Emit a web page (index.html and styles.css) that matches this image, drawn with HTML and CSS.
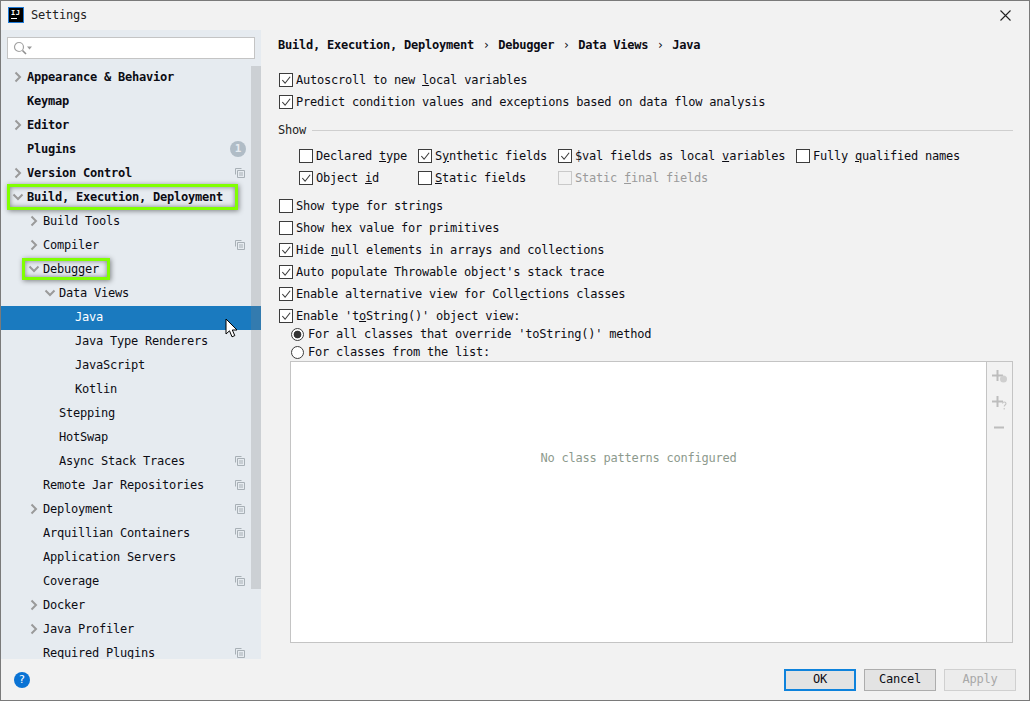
FILE: index.html
```html
<!DOCTYPE html>
<html lang="en">
<head>
<meta charset="utf-8">
<title>Settings</title>
<link rel="stylesheet" href="styles.css">
</head>
<body>
<svg class="defs" width="0" height="0">
  <defs>
    <symbol id="right" viewBox="0 0 8 12"><path d="M1.5 1.5 6 6l-4.500 4.500" fill="none" stroke="#9a9a9a" stroke-width="2"/></symbol>
    <symbol id="down" viewBox="0 0 12 8"><path d="M1.500 1.500 6 6l4.500-4.500" fill="none" stroke="#9a9a9a" stroke-width="2"/></symbol>
    <symbol id="copy" viewBox="0 0 10 10"><path d="M.5 6.500V.5h6M2.500 2.500h7v7h-7zM4 5h4M4 7h4" fill="none" stroke="#a8b0b6" stroke-width="1"/></symbol>
    <symbol id="tick" viewBox="0 0 13 13"><path d="M2.500 6.500 5.500 10 11 3" fill="none" stroke="#3c3c3c" stroke-width="1.200"/></symbol>
  </defs>
</svg>
<div class="window">
  <header class="titlebar">
    <span class="logo"><span class="logo-text">IJ</span><span class="logo-bar"></span></span>
    <span class="title">Settings</span>
    <svg class="close" width="11" height="11" viewBox="0 0 11 11"><path d="M.5.5l10 10M10.500.5l-10 10" stroke="#222" stroke-width="1.100"/></svg>
  </header>
  <div class="body">
    <aside class="sidebar">
      <div class="search">
        <svg width="20" height="15" viewBox="0 0 20 15"><circle cx="6" cy="6" r="4.500" fill="none" stroke="#a2a2a2" stroke-width="1.200"/><path d="M9.500 9.500l3.500 3.500" stroke="#8f8f8f" stroke-width="1.600"/><path d="M14 5.500h5l-2.500 3z" fill="#9a9a9a"/></svg>
      </div>
      <div class="tree">
        <div class="row d0 strong"><svg class="arrow"><use href="#right"/></svg><span>Appearance &amp; Behavior</span></div>
        <div class="row d0 strong"><span>Keymap</span></div>
        <div class="row d0 strong"><svg class="arrow"><use href="#right"/></svg><span>Editor</span></div>
        <div class="row d0 strong"><span>Plugins</span><span class="badge">1</span></div>
        <div class="row d0 strong"><svg class="arrow"><use href="#right"/></svg><span>Version Control</span><svg class="copy"><use href="#copy"/></svg></div>
        <div class="row d0 strong"><svg class="arrow wide"><use href="#down"/></svg><span>Build, Execution, Deployment</span><i class="mark mark-build"></i></div>
        <div class="row d1"><svg class="arrow"><use href="#right"/></svg><span>Build Tools</span></div>
        <div class="row d1"><svg class="arrow"><use href="#right"/></svg><span>Compiler</span><svg class="copy"><use href="#copy"/></svg></div>
        <div class="row d1"><svg class="arrow wide"><use href="#down"/></svg><span>Debugger</span><i class="mark mark-debugger"></i></div>
        <div class="row d2"><svg class="arrow wide"><use href="#down"/></svg><span>Data Views</span></div>
        <div class="row d3 selected"><span>Java</span></div>
        <div class="row d3"><span>Java Type Renderers</span></div>
        <div class="row d3"><span>JavaScript</span></div>
        <div class="row d3"><span>Kotlin</span></div>
        <div class="row d2"><span>Stepping</span></div>
        <div class="row d2"><span>HotSwap</span></div>
        <div class="row d2"><span>Async Stack Traces</span><svg class="copy"><use href="#copy"/></svg></div>
        <div class="row d1"><span>Remote Jar Repositories</span><svg class="copy"><use href="#copy"/></svg></div>
        <div class="row d1"><svg class="arrow"><use href="#right"/></svg><span>Deployment</span><svg class="copy"><use href="#copy"/></svg></div>
        <div class="row d1"><span>Arquillian Containers</span><svg class="copy"><use href="#copy"/></svg></div>
        <div class="row d1"><span>Application Servers</span></div>
        <div class="row d1"><span>Coverage</span><svg class="copy"><use href="#copy"/></svg></div>
        <div class="row d1"><svg class="arrow"><use href="#right"/></svg><span>Docker</span></div>
        <div class="row d1"><svg class="arrow"><use href="#right"/></svg><span>Java Profiler</span></div>
        <div class="row d1"><span>Required Plugins</span><svg class="copy"><use href="#copy"/></svg></div>
        <div class="scrollbar"></div>
        <svg class="cursor" width="14" height="20" viewBox="0 0 14 20"><path d="M1 1v15l3.500-3.200 2.500 6 2.800-1.200-2.500-5.600H12z" fill="#fff" stroke="#000" stroke-width="1"/></svg>
      </div>
    </aside>
    <main class="main">
      <nav class="crumbs">
        <span>Build, Execution, Deployment</span><span class="sep">›</span><span>Debugger</span><span class="sep">›</span><span>Data Views</span><span class="sep">›</span><span>Java</span>
      </nav>
      <label class="opt"><span class="box"><svg><use href="#tick"/></svg></span><span>Autoscroll to new <u>l</u>ocal variables</span></label>
      <label class="opt"><span class="box"><svg><use href="#tick"/></svg></span><span>Predict condition values and exceptions based on data flow analysis</span></label>
      <div class="group-title"><span>Show</span><span class="rule"></span></div>
      <div class="fields">
        <label class="opt"><span class="box"></span><span>Declared <u>t</u>ype</span></label>
        <label class="opt"><span class="box"><svg><use href="#tick"/></svg></span><span>S<u>y</u>nthetic fields</span></label>
        <label class="opt"><span class="box"><svg><use href="#tick"/></svg></span><span>$val fields as local <u>v</u>ariables</span></label>
        <label class="opt"><span class="box"></span><span>Fully <u>q</u>ualified names</span></label>
        <label class="opt"><span class="box"><svg><use href="#tick"/></svg></span><span>Object <u>i</u>d</span></label>
        <label class="opt"><span class="box"></span><span><u>S</u>tatic fields</span></label>
        <label class="opt disabled"><span class="box"></span><span>Static <u>f</u>inal fields</span></label>
      </div>
      <div class="after-fields">
        <label class="opt"><span class="box"></span><span>Show type for strings</span></label>
        <label class="opt"><span class="box"></span><span>Show hex value for primitives</span></label>
        <label class="opt"><span class="box"><svg><use href="#tick"/></svg></span><span>Hide <u>n</u>ull elements in arrays and collections</span></label>
        <label class="opt"><span class="box"><svg><use href="#tick"/></svg></span><span>Auto populate Throwable object's stack trace</span></label>
        <label class="opt"><span class="box"><svg><use href="#tick"/></svg></span><span>Enable alternative view for Coll<u>e</u>ctions classes</span></label>
        <label class="opt"><span class="box"><svg><use href="#tick"/></svg></span><span>Enable 't<u>o</u>String()' object view:</span></label>
      </div>
      <div class="radios">
        <label class="radio-row"><span class="radio on"></span><span>For all classes that override 'toString()' method</span></label>
        <label class="radio-row"><span class="radio"></span><span>For classes from the list:</span></label>
      </div>
      <div class="listbox">
        <div class="list-empty">No class patterns configured</div>
        <div class="list-tools">
          <svg width="18" height="16" viewBox="0 0 18 16"><path d="M5.500 1v11M0 6.500h11" stroke="#bdbdbd" stroke-width="2"/><circle cx="11.500" cy="10" r="3.500" fill="#cfcfcf"/></svg>
          <svg width="18" height="16" viewBox="0 0 18 16"><path d="M5.500 1v11M0 6.500h11" stroke="#bdbdbd" stroke-width="2"/><path d="M10.500 8.500c0-2 3.500-2 3.500 0 0 1.500-1.800 1.500-1.800 3M12.200 13v1.500" fill="none" stroke="#c4c4c4" stroke-width="1.100"/></svg>
          <svg width="18" height="16" viewBox="0 0 18 16"><path d="M2 6.500h10" stroke="#bdbdbd" stroke-width="2"/></svg>
        </div>
      </div>
    </main>
  </div>
  <footer class="footer">
    <span class="help">?</span>
    <div class="buttons">
      <button class="btn default">OK</button>
      <button class="btn">Cancel</button>
      <button class="btn off">Apply</button>
    </div>
  </footer>
</div>
</body>
</html>
```
FILE: styles.css
```css
* { box-sizing: border-box; }
html, body { margin: 0; padding: 0; height: 100%; }
body {
  font-family: "DejaVu Sans Mono", "Liberation Mono", monospace;
  font-size: 12px;
  letter-spacing: -0.22px;
  color: #0c0c14;
  overflow: hidden;
}
.defs { position: absolute; }
.window {
  width: 1030px;
  height: 701px;
  display: flex;
  flex-direction: column;
  background: #f2f2f2;
  border: 1px solid #7a7a7a;
}
.titlebar {
  height: 29px;
  display: flex;
  align-items: center;
  padding: 0 18px 1px 7px;
  flex: none;
}
.logo {
  width: 16px;
  height: 16px;
  background: #000;
  outline: 1px solid #1f7ad6;
  outline-offset: -1px;
  display: block;
  color: #fff;
  font: bold 7px/8px "DejaVu Sans Mono", monospace;
  letter-spacing: 0.500px;
  padding: 2px 0 0 3px;
}
.logo-text { display: block; }
.logo-bar { display: block; width: 6px; height: 1px; background: #fff; margin-top: 1px; }
.title { margin-left: 7px; color: #222; }
.close { margin-left: auto; }
.body { flex: 1; display: flex; min-height: 0; }
.sidebar {
  width: 260px;
  flex: none;
  background: #e6ebf0;
  display: flex;
  flex-direction: column;
  padding-top: 7px;
}
.search {
  margin: 0 6px;
  height: 22px;
  flex: none;
  background: #fff;
  border: 1px solid #c4c4c4;
  display: flex;
  align-items: center;
  padding-left: 5px;
}
.tree {
  margin-top: 7px;
  flex: 1;
  position: relative;
  overflow: hidden;
}
.row {
  height: 24px;
  flex: none;
  display: flex;
  align-items: center;
  position: relative;
  padding-bottom: 2px;
  padding-right: 16px;
}
.d0 { padding-left: 26px; }
.d1 { padding-left: 42px; }
.d2 { padding-left: 58px; }
.d3 { padding-left: 74px; }
.strong { font-weight: bold; }
.arrow {
  position: absolute;
  width: 8px;
  height: 12px;
  top: 5px;
  margin-left: -13px;
}
.arrow.wide { width: 12px; height: 8px; top: 7px; margin-left: -15px; }
.copy { width: 10px; height: 10px; position: absolute; right: 16px; top: 6px; }
.badge {
  position: absolute;
  right: 15px;
  top: 3px;
  width: 16px;
  height: 16px;
  border-radius: 50%;
  background: #b0bcc6;
  color: #e6ebf0;
  text-align: center;
  line-height: 16px;
  font-size: 11px;
}
.selected { background: #1a7abf; color: #fff; }
.mark {
  position: absolute;
  top: -2px;
  height: 26px;
  border: 3px solid #80ff00;
  box-shadow: 1px 1px 5px rgba(0,0,0,.45), inset 0 0 5px rgba(0,0,0,.45);
}
.mark-build { left: 6px; width: 231px; }
.mark-debugger { left: 21px; width: 88px; top: 0; height: 22px; }
.scrollbar {
  position: absolute;
  top: 0;
  right: 0;
  width: 10px;
  height: 523px;
  background: rgba(128,128,128,.25);
}
.cursor { position: absolute; left: 224px; top: 252px; }
.main { flex: 1; min-width: 0; padding: 0 16px 16px 17px; display: flex; flex-direction: column; }
.crumbs {
  height: 30px;
  margin-bottom: 9px;
  flex: none;
  display: flex;
  align-items: center;
  font-weight: bold;
}
.sep { width: 24px; text-align: center; font-weight: normal; }
.opt {
  height: 22px;
  display: flex;
  align-items: center;
  white-space: nowrap;
}
.box {
  width: 14px;
  height: 14px;
  flex: none;
  border: 1px solid #3c3c3c;
  background: #fff;
  margin: 0 3px 0 1px;
  display: block;
}
.box svg { display: block; width: 12px; height: 12px; }
.group-title { height: 22px; margin-top: 6px; display: flex; align-items: center; color: #222; }
.rule { flex: 1; height: 1px; background: #cfcfcf; margin-left: 6px; }
.fields {
  margin-top: 4px;
  padding-left: 20px;
  display: grid;
  grid-template-columns: 119px 140px 238px auto;
}
.disabled { color: #9a9a9a; }
.disabled .box { border-color: #c9c9c9; background: #f2f2f2; }
.after-fields { margin-top: 6px; }
.radios { margin-top: -2px; }
.radio-row { height: 18px; display: flex; align-items: center; padding-left: 13px; }
.radio {
  width: 13px;
  height: 13px;
  border: 1px solid #3c3c3c;
  border-radius: 50%;
  background: #fff;
  margin-right: 4px;
  flex: none;
}
.radio.on { background: radial-gradient(circle, #333 0 3.500px, #fff 4.200px); }
.listbox {
  flex: 1;
  margin-left: 12px;
  border: 1px solid #c4c4c4;
  display: flex;
  min-height: 0;
}
.list-empty {
  flex: 1;
  background: #fff;
  color: #8d9a8d;
  display: flex;
  align-items: center;
  justify-content: center;
  padding-bottom: 88px;
}
.list-tools {
  width: 26px;
  border-left: 1px solid #c4c4c4;
  display: flex;
  flex-direction: column;
  align-items: flex-start;
  padding: 7px 0 0 5px;
  gap: 10px;
}
.footer {
  height: 41px;
  flex: none;
  display: flex;
  align-items: center;
  padding: 1px 13px 0 13px;
}
.help {
  width: 16px;
  height: 16px;
  border-radius: 50%;
  background: #0a73d4;
  color: #fff;
  text-align: center;
  font: 11px/16px "DejaVu Sans", sans-serif;
  letter-spacing: 0;
}
.buttons { margin-left: auto; margin-top: -1px; display: flex; gap: 8px; }
.btn {
  width: 72px;
  height: 22px;
  padding: 0 0 1px;
  font: inherit;
  letter-spacing: inherit;
  color: inherit;
  background: #e3e3e3;
  border: 1px solid #adadad;
}
.btn.default { border: 2px solid #0f83dc; }
.btn.off { background: #ececec; border-color: #d0d0d0; color: #a8a8a8; }
```
